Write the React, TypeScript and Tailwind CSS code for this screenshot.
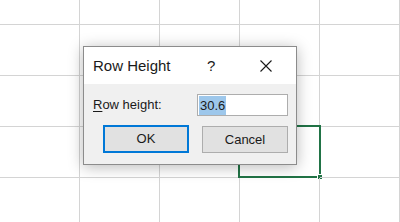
import React from "react";

const font = { fontFamily: '"Liberation Sans", Arial, sans-serif' };

export default function App() {
  const cells = Array.from({ length: 25 }, (_, i) => i);
  return (
    <div className="relative w-[400px] h-[222px] overflow-hidden bg-white" style={font}>
      <div className="grid grid-cols-[repeat(5,80px)] grid-rows-[25px_repeat(4,51px)]">
        {cells.map((i) => (
          <div key={i} className="relative border-r border-b border-[#d4d4d4]">
            {i === 18 && (
              <div className="absolute -left-[2px] -top-[2px] w-[83px] h-[53px] border-2 border-[#217346]">
                <div className="absolute -right-[4px] -bottom-[4px] w-[6px] h-[6px] bg-[#217346] border border-white" />
              </div>
            )}
          </div>
        ))}
      </div>

      <div className="absolute left-[83px] top-[46px] w-[214px] h-[119px] border border-[#8c8c8c] bg-[#f0f0f0] shadow-[0_2px_14px_rgba(0,0,0,0.28)] flex flex-col">
        <div className="h-[37px] bg-white flex items-center pl-[9px] pt-[1px] text-[15px] text-[#1a1a1a]">
          <span className="w-[114px]">Row Height</span>
          <span className="w-[53px]">?</span>
          <svg width="12" height="12" viewBox="0 0 12 12">
            <path d="M0.5 0.5 L11.5 11.5 M11.5 0.5 L0.5 11.5" stroke="#1a1a1a" strokeWidth="1.1" fill="none" />
          </svg>
        </div>
        <div className="flex-1 flex flex-col pt-[10px] pr-[8px] text-[13px] text-[#1a1a1a]">
          <div className="flex items-center justify-between pl-[9px] h-[22px]">
            <span>
              <span className="underline underline-offset-2">R</span>ow height:
            </span>
            <div className="w-[91px] h-[22px] bg-white border border-[#adadad] flex items-center pl-[1px]">
              <span className="bg-[#9dc7eb] leading-[19px] px-[1px]">30.6</span>
            </div>
          </div>
          <div className="flex justify-between items-start pl-[19px] mt-[9px]">
            <button className="w-[86px] h-[28px] bg-[#e1e1e1] border-2 border-[#0078d7] flex items-center justify-center text-[13px]">
              OK
            </button>
            <button className="w-[86px] h-[27px] mt-[1px] bg-[#e1e1e1] border border-[#adadad] flex items-center justify-center text-[13px]">
              Cancel
            </button>
          </div>
        </div>
      </div>
    </div>
  );
}
